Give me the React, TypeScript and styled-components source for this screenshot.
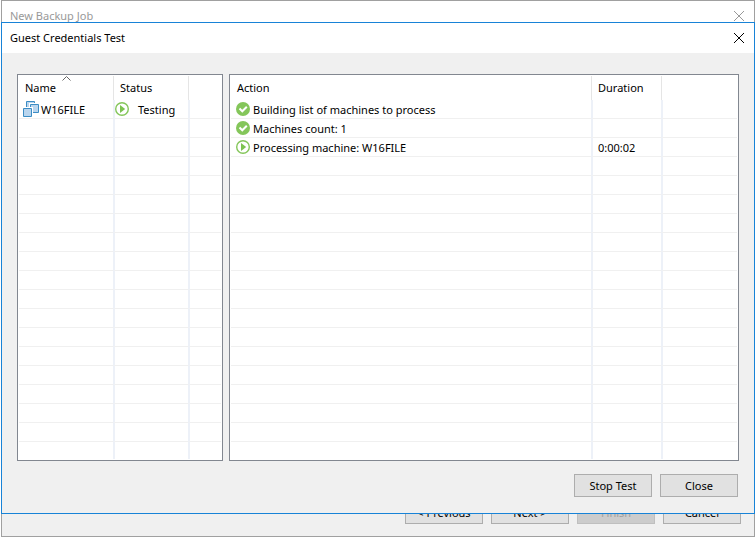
import React from 'react';
import styled, { createGlobalStyle } from 'styled-components';

const GlobalStyle = createGlobalStyle`
  *, *::before, *::after { box-sizing: border-box; }
  body {
    margin: 0;
    background: #fff;
    color: #000;
    font: 11px/16px "Noto Sans", "Segoe UI", sans-serif;
  }
`;

const Screen = styled.main`
  display: flex;
  min-height: 100vh;
  padding-left: 1px;
`;

const ParentWindow = styled.section`
  position: relative;
  flex: 1;
  display: flex;
  flex-direction: column;
  background: #f0f0f0;
  border: 1px solid #a0a0a0;
`;

const TitleBar = styled.header<{ $inactive?: boolean }>`
  display: flex;
  align-items: center;
  justify-content: space-between;
  height: 30px;
  padding: 0 8px;
  background: #fff;
  color: ${(p) => (p.$inactive ? '#999' : '#000')};
`;

const Title = styled.h1`
  margin: 0;
  font-size: 11px;
  line-height: 16px;
  font-weight: 400;
`;

const CloseButton = styled.button`
  display: flex;
  padding: 2px;
  border: 0;
  background: none;
  color: inherit;
`;

const ParentFooter = styled.footer`
  display: flex;
  justify-content: flex-end;
  gap: 8px;
  margin-top: auto;
  padding: 0 13px 12px;
`;

const PushButton = styled.button`
  width: 78px;
  height: 23px;
  padding: 0;
  border: 1px solid #adadad;
  background: #e1e1e1;
  color: #000;
  font: inherit;
  &:disabled {
    border-color: #bfbfbf;
    background: #ccc;
    color: #a0a0a0;
  }
`;

const Dialog = styled.section`
  position: absolute;
  top: 21px;
  left: -1px;
  right: -1px;
  background: #f0f0f0;
  border: 1px solid #1883d7;
`;

const Panels = styled.div`
  display: flex;
  gap: 6px;
  padding: 21px 15px 0;
`;

const Panel = styled.div<{ $width?: number }>`
  flex: ${(p) => (p.$width ? `0 0 ${p.$width}px` : '1')};
  min-width: 0;
  padding: 1px;
  background: #fff;
  border: 1px solid #828790;
`;

const Grid = styled.table`
  width: 100%;
  table-layout: fixed;
  border-collapse: separate;
  border-spacing: 0;
`;

const Column = styled.col<{ $width?: number }>`
  width: ${(p) => (p.$width ? `${p.$width}px` : 'auto')};
`;

const HeadCell = styled.th`
  position: relative;
  height: 24px;
  padding: 0 6px;
  text-align: left;
  font-weight: 400;
  & + & { border-left: 1px solid #e5e5e5; }
`;

const Cell = styled.td<{ $flush?: boolean }>`
  height: 19px;
  padding: 0 ${(p) => (p.$flush ? 0 : 4)}px;
  border-bottom: 1px solid #f0f0f0;
  white-space: nowrap;
  & + & { border-left: 2px solid #edf1f8; }
  tr:last-child > & {
    height: 17px;
    border-bottom: 0;
  }
`;

const CellContent = styled.div<{ $gap?: number; $indent?: number }>`
  display: flex;
  align-items: center;
  gap: ${(p) => p.$gap ?? 0}px;
  height: 18px;
  padding-left: ${(p) => p.$indent ?? 0}px;
`;

const Label = styled.span`
  padding-top: 2px;
`;

const SortMark = styled.svg`
  position: absolute;
  top: 0;
  left: calc(50% - 4px);
  display: block;
`;

const Actions = styled.footer`
  display: flex;
  justify-content: flex-end;
  gap: 8px;
  padding: 13px 16px 16px;
`;

const Cross = () => (
  <svg width="10" height="10" viewBox="0 0 10 10" stroke="currentColor" strokeWidth="1" aria-hidden="true">
    <path d="M0 0l10 10M10 0l-10 10" />
  </svg>
);

const MachineIcon = () => (
  <svg width="16" height="16" viewBox="0 0 16 16" fill="#b9d5ee" stroke="#3b8cc4" aria-hidden="true">
    <path d="M3.5.5h8v8h-8z" />
    <path d="M7.5 3.5h8v8h-8z" stroke="#fff" strokeWidth="3" />
    <path d="M7.5 3.5h8v8h-8z" />
    <path d="M.5 7.5h8v8h-8z" stroke="#fff" strokeWidth="3" />
    <path d="M.5 7.5h8v8h-8z" />
  </svg>
);

const RunningIcon = () => (
  <svg width="14" height="14" viewBox="0 0 14 14" aria-hidden="true">
    <circle cx="7" cy="7" r="6.3" fill="#fff" stroke="#84c65a" strokeWidth="1.4" />
    <path d="M5 3l5.2 4-5.2 4z" fill="#7cc351" />
  </svg>
);

const DoneIcon = () => (
  <svg width="14" height="14" viewBox="0 0 14 14" aria-hidden="true">
    <circle cx="7" cy="7" r="7" fill="#84c65a" />
    <path d="M3.5 6.5l2.8 2.8 4.500-4.500" fill="none" stroke="#fff" strokeWidth="2" />
  </svg>
);

const machines = [{ name: 'W16FILE', status: 'Testing' }];

const actions = [
  { text: 'Building list of machines to process', done: true, duration: '' },
  { text: 'Machines count: 1', done: true, duration: '' },
  { text: 'Processing machine: W16FILE', done: false, duration: '0:00:02' },
];

const ROW_COUNT = 19;

const BlankRows = ({ used }: { used: number }) => (
  <>
    {Array.from({ length: ROW_COUNT - used }, (_, i) => (
      <tr key={i}>
        <Cell />
        <Cell />
        <Cell />
      </tr>
    ))}
  </>
);

const MachineList = () => (
  <Panel $width={206}>
    <Grid aria-label="Machines">
      <colgroup>
        <Column $width={94} />
        <Column $width={75} />
        <Column />
      </colgroup>
      <thead>
        <tr>
          <HeadCell aria-sort="ascending">
            Name
            <SortMark width="9" height="5" viewBox="0 0 9 5" fill="none" stroke="#666" aria-hidden="true">
              <path d="M.5 4.5l4-4 4 4" />
            </SortMark>
          </HeadCell>
          <HeadCell>Status</HeadCell>
          <HeadCell />
        </tr>
      </thead>
      <tbody>
        {machines.map((m) => (
          <tr key={m.name}>
            <Cell>
              <CellContent $gap={2}>
                <MachineIcon />
                <Label>{m.name}</Label>
              </CellContent>
            </Cell>
            <Cell $flush>
              <CellContent $gap={9}>
                <RunningIcon />
                <Label>{m.status}</Label>
              </CellContent>
            </Cell>
            <Cell />
          </tr>
        ))}
        <BlankRows used={machines.length} />
      </tbody>
    </Grid>
  </Panel>
);

const ActionList = () => (
  <Panel>
    <Grid aria-label="Actions">
      <colgroup>
        <Column />
        <Column $width={70} />
        <Column $width={76} />
      </colgroup>
      <thead>
        <tr>
          <HeadCell>Action</HeadCell>
          <HeadCell>Duration</HeadCell>
          <HeadCell />
        </tr>
      </thead>
      <tbody>
        {actions.map((a) => (
          <tr key={a.text}>
            <Cell>
              <CellContent $gap={3} $indent={1}>
                {a.done ? <DoneIcon /> : <RunningIcon />}
                <Label>{a.text}</Label>
              </CellContent>
            </Cell>
            <Cell>
              <CellContent $indent={1}>
                <Label>{a.duration}</Label>
              </CellContent>
            </Cell>
            <Cell />
          </tr>
        ))}
        <BlankRows used={actions.length} />
      </tbody>
    </Grid>
  </Panel>
);

export default function App() {
  return (
    <>
      <GlobalStyle />
      <Screen>
        <ParentWindow>
          <TitleBar $inactive>
            <Title>New Backup Job</Title>
            <CloseButton aria-label="Close wizard">
              <Cross />
            </CloseButton>
          </TitleBar>
          <ParentFooter>
            <PushButton>&lt; Previous</PushButton>
            <PushButton>Next &gt;</PushButton>
            <PushButton disabled>Finish</PushButton>
            <PushButton>Cancel</PushButton>
          </ParentFooter>
          <Dialog role="dialog" aria-label="Guest Credentials Test">
            <TitleBar>
              <Title>Guest Credentials Test</Title>
              <CloseButton aria-label="Close dialog">
                <Cross />
              </CloseButton>
            </TitleBar>
            <Panels>
              <MachineList />
              <ActionList />
            </Panels>
            <Actions>
              <PushButton>Stop Test</PushButton>
              <PushButton>Close</PushButton>
            </Actions>
          </Dialog>
        </ParentWindow>
      </Screen>
    </>
  );
}
